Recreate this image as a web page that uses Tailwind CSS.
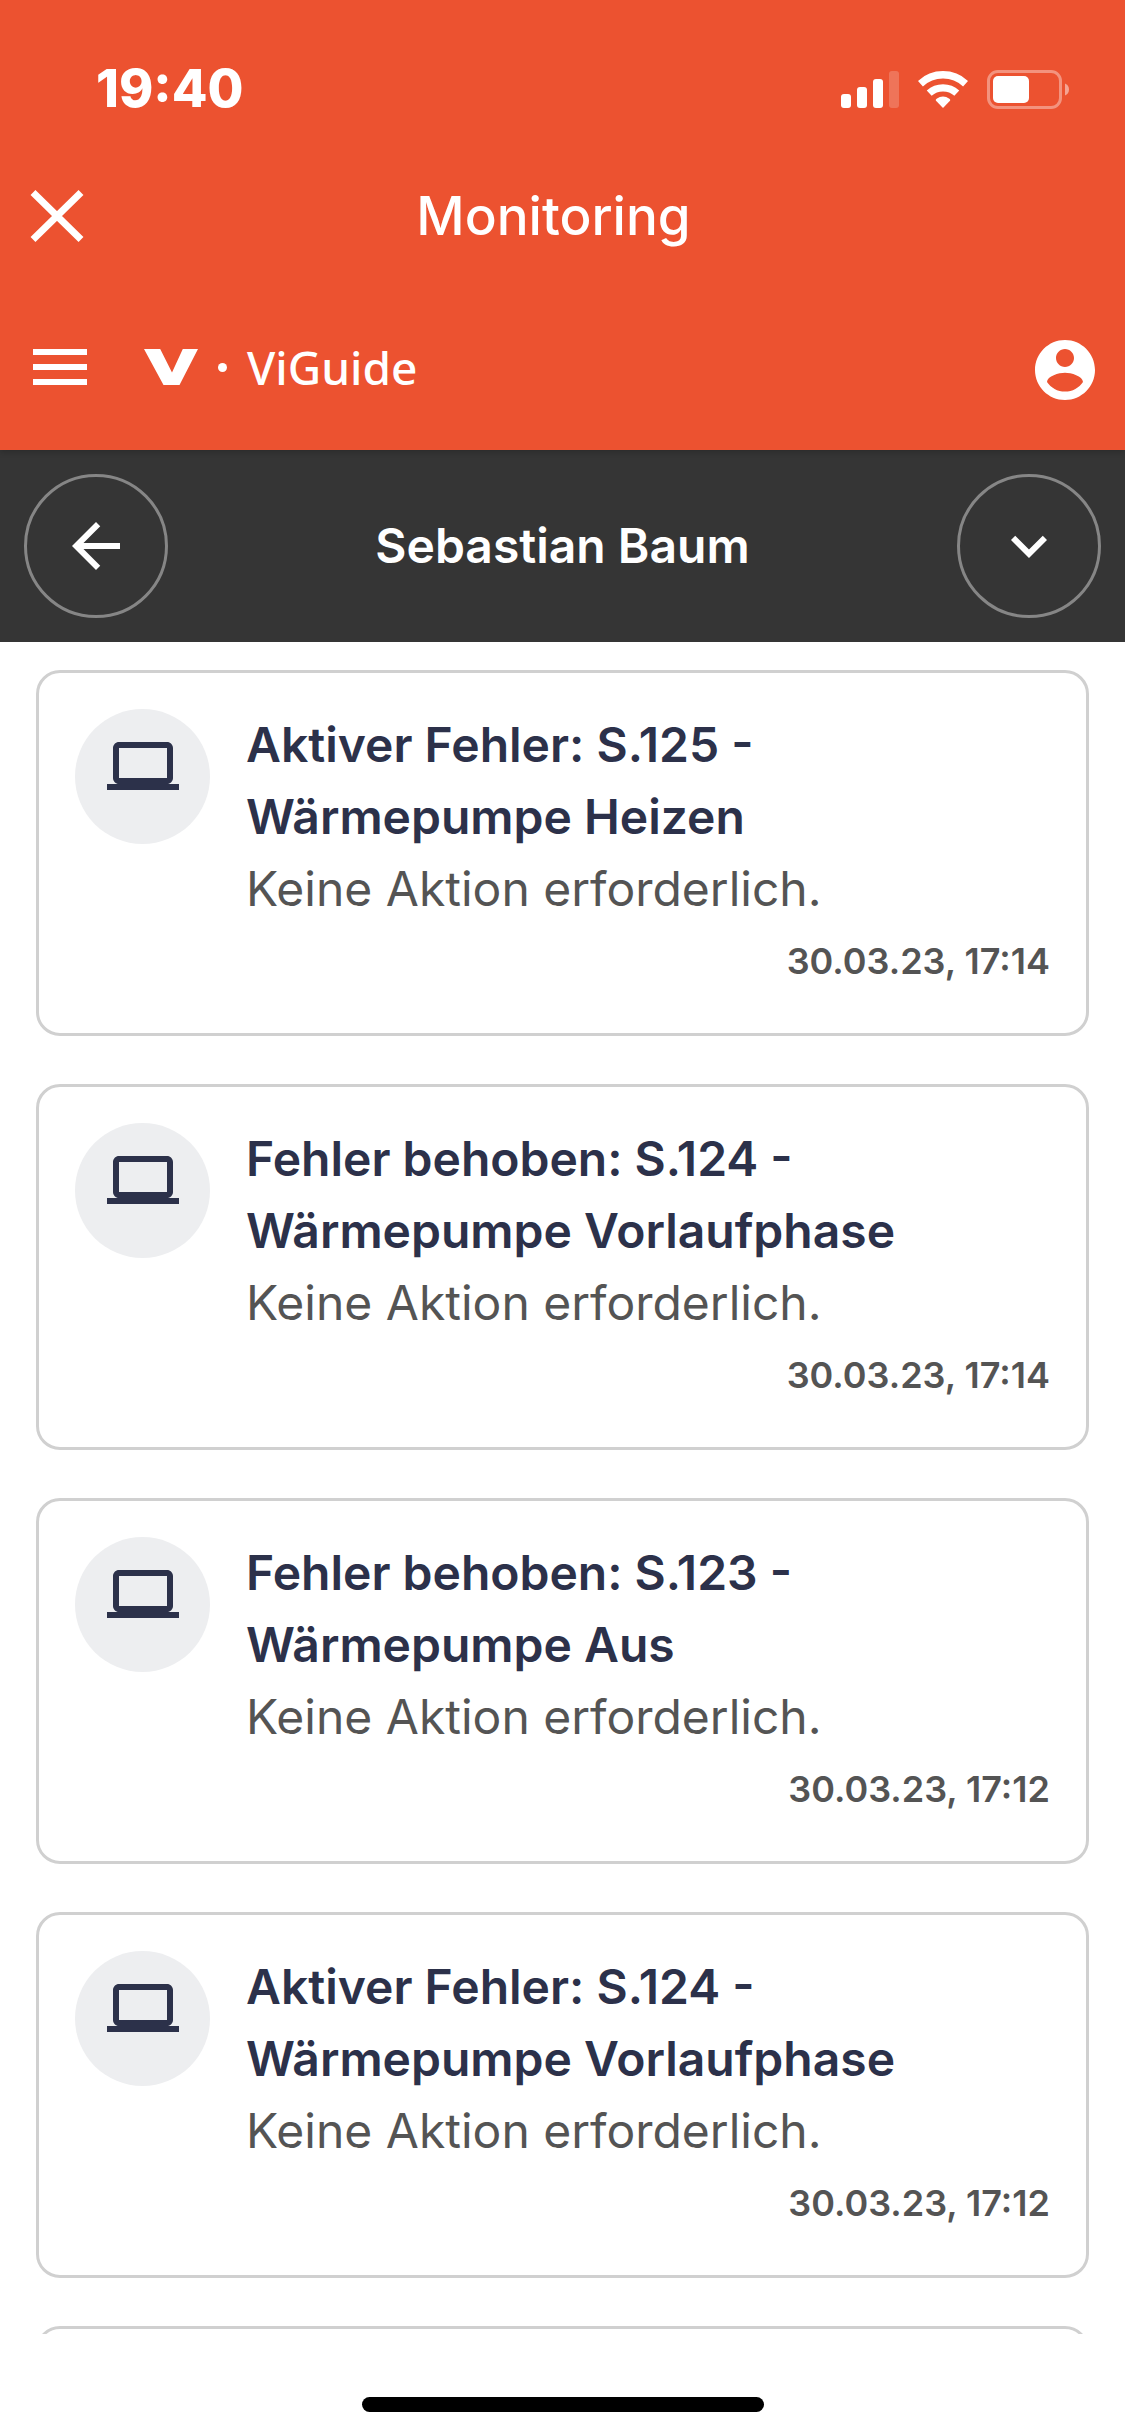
<!DOCTYPE html>
<html lang="de">
  <head>
    <meta charset="UTF-8" />
    <meta name="viewport" content="width=device-width, initial-scale=1.0" />
    <title>ViGuide - Monitoring</title>
    <script src="https://cdn.jsdelivr.net/npm/@tailwindcss/browser@4"></script>
  </head>
  <body class="font-['Inter',sans-serif] bg-white">
    <!-- Icon shared by all cards -->
    <svg class="hidden">
      <symbol id="laptop" viewBox="0 0 24 24">
        <path
          d="M20 18c1.1 0 2-.9 2-2V6c0-1.1-.9-2-2-2H4c-1.1 0-2 .9-2 2v10c0 1.1.9 2 2 2H0v2h24v-2h-4zM4 6h16v10H4V6z"
        />
      </symbol>
    </svg>

    <div class="flex flex-col h-screen">
      <header class="relative z-10 shrink-0 bg-[#ec5230] text-white pt-[54px] pb-6 shadow-[0_2px_6px_rgba(0,0,0,0.2)]">
        <!-- Status bar -->
        <div class="flex items-center justify-between h-[70px] pl-24 pr-14">
          <time class="text-[52px] leading-[72px] font-extrabold">19:40</time>
          <div class="flex items-center gap-[19px]">
            <svg class="w-[58px] h-[37px]" viewBox="0 0 58 37" fill="currentColor">
              <rect x="0" y="23" width="10" height="14" rx="3" />
              <rect x="16" y="16" width="10" height="21" rx="3" />
              <rect x="32" y="8" width="10" height="29" rx="3" />
              <rect x="48" y="0" width="10" height="37" rx="3" opacity=".2" />
            </svg>
            <svg class="w-[50px] h-[37px]" viewBox="0 0 50 37" fill="none">
              <path d="M2.4 12.7A33.2 33.2 0 0 1 47.6 12.7" stroke="currentColor" stroke-width="7.4" />
              <path d="M11.2 22.2A20.3 20.3 0 0 1 38.8 22.2" stroke="currentColor" stroke-width="7.2" />
              <path d="M25 37L17.8 29.5Q17.6 28.4 18.6 27.7A11.5 11.5 0 0 1 31.4 27.7Q32.4 28.4 32.2 29.5Z" fill="currentColor" />
            </svg>
            <svg class="w-[82px] h-[39px]" viewBox="0 0 82 39" fill="currentColor">
              <rect x="1.5" y="1.5" width="72" height="36" rx="9.5" fill="none" stroke="currentColor" stroke-width="3" opacity=".38" />
              <rect x="6" y="6" width="36" height="27" rx="5" />
              <path d="M78 13.5c2.5 1 4 3.2 4 6s-1.5 5-4 6z" opacity=".48" />
            </svg>
          </div>
        </div>

        <!-- Title -->
        <div class="flex items-center h-[184px] pl-6 pr-[108px]">
          <button type="button" aria-label="Schließen" class="w-[66px] h-[66px] flex items-center justify-center">
            <svg class="w-[54px] h-[54px]" viewBox="0 0 54 54" fill="none" stroke="currentColor" stroke-width="7">
              <path d="M3 3.5L51 50.5M51 3.5L3 50.5" />
            </svg>
          </button>
          <h1 class="flex-1 text-center text-[53px] leading-[72px] font-medium">Monitoring</h1>
        </div>

        <!-- Navigation -->
        <nav class="flex items-center h-[118px] px-6">
          <button type="button" aria-label="Menü">
            <svg class="w-[72px] h-[72px]" viewBox="0 0 24 24" fill="currentColor">
              <path d="M3 6h18v2H3zM3 11h18v2H3zM3 16h18v2H3z" />
            </svg>
          </button>
          <a href="#" class="flex items-center ml-12">
            <svg class="w-[54px] h-9" viewBox="0 0 54 36" fill="currentColor">
              <path d="M0 0h16.2L28 23.5 38.8 0H54L35.5 36H19.5z" />
            </svg>
            <span class="size-[9px] rounded-full bg-white mx-5"></span>
            <span class="text-[46px] leading-[64px] font-medium font-['Noto_Sans',sans-serif]">ViGuide</span>
          </a>
          <button type="button" aria-label="Konto" class="ml-auto pt-1.5">
            <svg class="w-[72px] h-[72px]" viewBox="0 0 24 24" fill="currentColor">
              <path
                d="M12 2C6.48 2 2 6.48 2 12s4.48 10 10 10 10-4.48 10-10S17.52 2 12 2zm0 3c1.66 0 3 1.34 3 3s-1.34 3-3 3-3-1.34-3-3 1.34-3 3-3zm0 14.2c-2.5 0-4.71-1.28-6-3.22.03-1.99 4-3.08 6-3.08 1.99 0 5.97 1.09 6 3.08-1.29 1.94-3.5 3.22-6 3.22z"
              />
            </svg>
          </button>
        </nav>
      </header>

      <div class="shrink-0 flex items-center justify-between h-48 px-6 bg-[#353535] text-white">
        <button type="button" aria-label="Zurück" class="size-36 rounded-full border-3 border-[#868686] flex items-center justify-center">
          <svg class="w-[72px] h-[72px]" viewBox="0 0 24 24" fill="currentColor">
            <path d="M20 11H7.83l5.59-5.59L12 4l-8 8 8 8 1.41-1.41L7.83 13H20v-2z" />
          </svg>
        </button>
        <h2 class="text-5xl leading-[72px] font-semibold">Sebastian Baum</h2>
        <button type="button" aria-label="Mehr anzeigen" class="size-36 rounded-full border-3 border-[#868686] flex items-center justify-center">
          <svg class="w-[72px] h-[72px]" viewBox="0 0 24 24" fill="currentColor">
            <path d="M16.59 8.59L12 13.17 7.41 8.59 6 10l6 6 6-6z" />
          </svg>
        </button>
      </div>

      <main class="flex-1 min-h-0 overflow-hidden px-9 pt-7">
        <ul class="flex flex-col gap-12">
          <li class="flex gap-9 p-9 border-3 border-[#d0d0d0] rounded-3xl">
            <div class="shrink-0 size-[135px] rounded-full bg-[#edeef0] flex justify-center pt-[21px]">
              <svg class="w-[72px] h-[72px] fill-[#2c314a]"><use href="#laptop" /></svg>
            </div>
            <div class="flex-1 text-5xl leading-[72px] text-[#545454]">
              <h3 class="font-semibold text-[#2c314a]">Aktiver Fehler: S.125 -<br />Wärmepumpe Heizen</h3>
              <p>Keine Aktion erforderlich.</p>
              <p class="text-right text-4xl leading-[72px] font-semibold">30.03.23, 17:14</p>
            </div>
          </li>
          <li class="flex gap-9 p-9 border-3 border-[#d0d0d0] rounded-3xl">
            <div class="shrink-0 size-[135px] rounded-full bg-[#edeef0] flex justify-center pt-[21px]">
              <svg class="w-[72px] h-[72px] fill-[#2c314a]"><use href="#laptop" /></svg>
            </div>
            <div class="flex-1 text-5xl leading-[72px] text-[#545454]">
              <h3 class="font-semibold text-[#2c314a]">Fehler behoben: S.124 -<br />Wärmepumpe Vorlaufphase</h3>
              <p>Keine Aktion erforderlich.</p>
              <p class="text-right text-4xl leading-[72px] font-semibold">30.03.23, 17:14</p>
            </div>
          </li>
          <li class="flex gap-9 p-9 border-3 border-[#d0d0d0] rounded-3xl">
            <div class="shrink-0 size-[135px] rounded-full bg-[#edeef0] flex justify-center pt-[21px]">
              <svg class="w-[72px] h-[72px] fill-[#2c314a]"><use href="#laptop" /></svg>
            </div>
            <div class="flex-1 text-5xl leading-[72px] text-[#545454]">
              <h3 class="font-semibold text-[#2c314a]">Fehler behoben: S.123 -<br />Wärmepumpe Aus</h3>
              <p>Keine Aktion erforderlich.</p>
              <p class="text-right text-4xl leading-[72px] font-semibold">30.03.23, 17:12</p>
            </div>
          </li>
          <li class="flex gap-9 p-9 border-3 border-[#d0d0d0] rounded-3xl">
            <div class="shrink-0 size-[135px] rounded-full bg-[#edeef0] flex justify-center pt-[21px]">
              <svg class="w-[72px] h-[72px] fill-[#2c314a]"><use href="#laptop" /></svg>
            </div>
            <div class="flex-1 text-5xl leading-[72px] text-[#545454]">
              <h3 class="font-semibold text-[#2c314a]">Aktiver Fehler: S.124 -<br />Wärmepumpe Vorlaufphase</h3>
              <p>Keine Aktion erforderlich.</p>
              <p class="text-right text-4xl leading-[72px] font-semibold">30.03.23, 17:12</p>
            </div>
          </li>
          <li class="p-9 border-3 border-[#d0d0d0] rounded-3xl"></li>
        </ul>
      </main>

      <!-- Home indicator -->
      <footer class="shrink-0 flex items-end justify-center h-[102px] pb-6">
        <div class="w-[402px] h-[15px] rounded-full bg-black"></div>
      </footer>
    </div>
  </body>
</html>
